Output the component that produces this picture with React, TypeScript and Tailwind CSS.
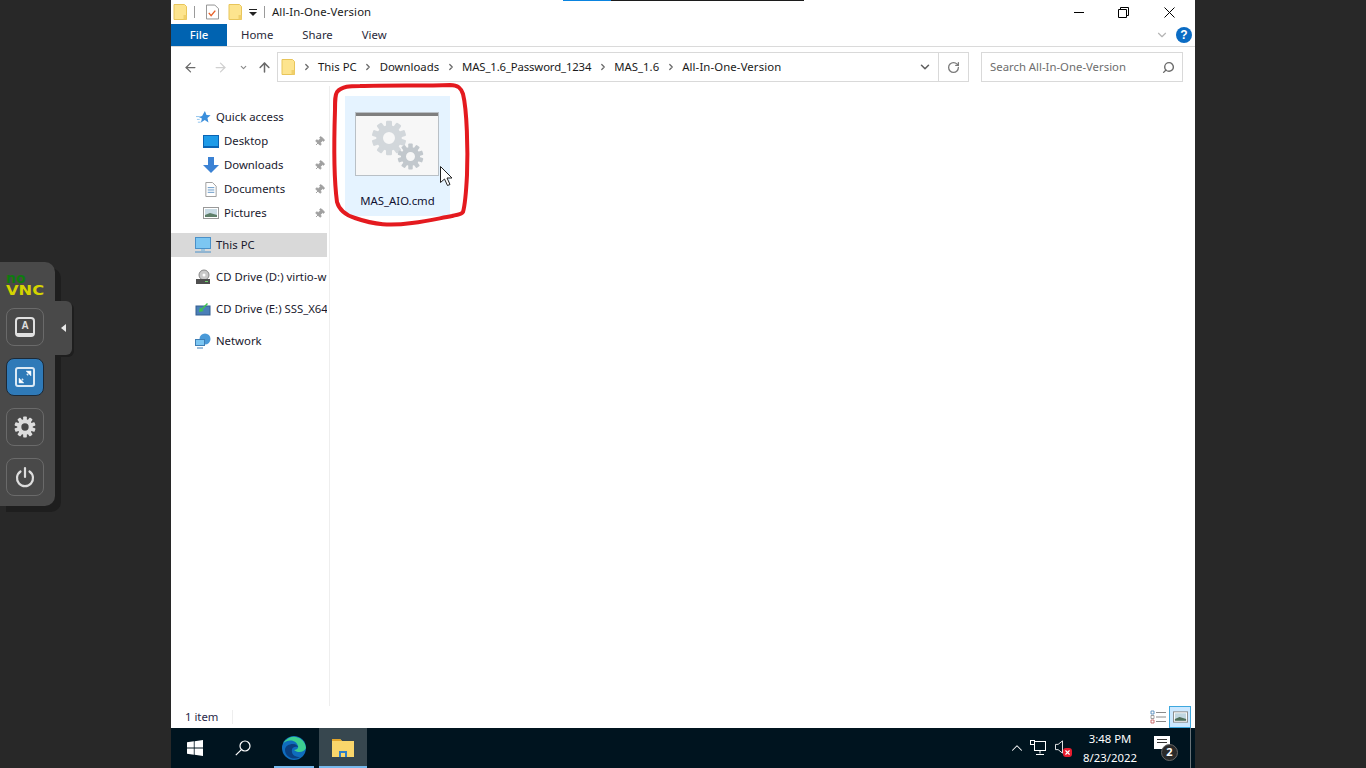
import React from 'react';
import { ArrowLeft, ArrowRight, ArrowUp, ChevronDown, ChevronRight, ChevronUp, RotateCw, Search, X, Pin } from 'lucide-react';

const Folder = ({ className = '' }: { className?: string }) => (
  <svg viewBox="0 0 14 16" className={className}>
    <path d="M1 .5h10.5l2 2v13H1z" fill="#fde48e" stroke="#e8c55a" strokeWidth="1" />
    <rect x="10.5" y="11" width="3" height="4.5" fill="#f0cf6a" />
  </svg>
);

const Gear = ({ size, color, className = '' }: { size: number; color: string; className?: string }) => (
  <svg viewBox="0 0 24 24" width={size} height={size} className={className}>
    <g fill={color}>
      {[0, 36, 72, 108, 144, 180, 216, 252, 288, 324].map((a) => (
        <rect key={a} x="10" y="0.5" width="4" height="6" rx="0.8" transform={`rotate(${a} 12 12)`} />
      ))}
      <path fillRule="evenodd" d="M12 3.5a8.5 8.5 0 1 1 0 17 8.5 8.5 0 0 1 0-17zm0 4.5a4 4 0 1 0 0 8 4 4 0 0 0 0-8z" />
    </g>
  </svg>
);

const NavRow = ({ icon, label, pinned, indent, active }: { icon: React.ReactNode; label: string; pinned?: boolean; indent?: boolean; active?: boolean }) => (
  <div className={`flex h-6 w-[156px] items-center overflow-hidden ${active ? 'bg-[#d9d9d9]' : ''}`}>
    <div className={`flex w-4 shrink-0 items-center justify-center ${indent ? 'ml-[32px]' : 'ml-[24px]'}`}>{icon}</div>
    <span className="ml-[5px] whitespace-nowrap text-[#1a1a2e]">{label}</span>
    {pinned && <Pin size={11} className="ml-auto mr-[2px] shrink-0 rotate-45 fill-[#a0a0a0] text-[#a0a0a0]" />}
  </div>
);

const Crumb = ({ label, className = '' }: { label: string; className?: string }) => (
  <>
    <ChevronRight size={10} strokeWidth={3} className="mx-[6.5px] text-[#6a6a6a]" />
    <span className={`text-[#1a1a1a] ${className}`}>{label}</span>
  </>
);

const ToolButton = ({ children, active }: { children: React.ReactNode; active?: boolean }) => (
  <div className={`flex h-[38px] w-[38px] items-center justify-center rounded-[8px] border ${active ? 'border-[#1c2a38] bg-[#2f7ab8]' : 'border-[#6a6a6a]'}`}>
    {children}
  </div>
);

const NoVncPanel = () => (
  <div className="relative flex h-[244px] w-[55px] flex-col items-start rounded-r-[10px] bg-[#494949] pl-[6px] shadow-[6px_6px_0_#1e1e1e]">
    <div className="mt-[10px] flex h-[24px] w-[38px] flex-col font-['DejaVu_Sans'] text-[14px] font-bold leading-[12px]">
      <span className="h-[12px] text-[#0f7a0f]">no</span>
      <span className="h-[12px] origin-left scale-x-[1.16] text-[#d4d400]">VNC</span>
    </div>
    <div className="mt-[12px] flex flex-col gap-[12px]">
      <ToolButton>
        <div className="flex h-[20px] w-[20px] items-center justify-center rounded-[4px] border-2 border-b-[4px] border-[#e0e0e0] font-['Liberation_Sans'] text-[10px] font-bold leading-none text-[#e0e0e0]">A</div>
      </ToolButton>
      <ToolButton active>
        <svg viewBox="0 0 24 24" width="24" height="24" fill="none" stroke="#dbe9f4">
          <rect x="3" y="3" width="18" height="18" rx="2" strokeWidth="2" />
          <path d="M13 6h5v5zM11 18H6v-5z" fill="#fff" strokeWidth="0.5" />
          <path d="M14 10l1-1M10 14l-1 1" strokeWidth="2" />
        </svg>
      </ToolButton>
      <ToolButton>
        <Gear size={22} color="#dddddd" />
      </ToolButton>
      <ToolButton>
        <svg viewBox="0 0 24 24" width="24" height="24" fill="none" stroke="#dddddd" strokeWidth="2.2" strokeLinecap="round">
          <path d="M12 3v9" />
          <path d="M7.5 6.5a8 8 0 1 0 9 0" />
        </svg>
      </ToolButton>
    </div>
    <div className="absolute left-[55px] top-[39px] flex h-[54px] w-[17px] items-center rounded-r-[6px] bg-[#494949] pl-[6px] shadow-[2px_2px_0_#1e1e1e]">
      <div className="h-0 w-0 border-y-[4px] border-r-[5px] border-y-transparent border-r-[#e8e8e8]" />
    </div>
  </div>
);

const CmdIcon = () => (
  <div className="relative h-[64px] w-[84px] border border-[#b9c0c6] bg-[#f7f7f7]">
    <div className="h-[3px] bg-[#7f7f7f]" />
    <Gear size={36} color="#d2d7db" className="absolute left-[15px] top-[7px]" />
    <Gear size={27} color="#c2c8cd" className="absolute left-[41px] top-[30px]" />
  </div>
);

export default function App() {
  return (
    <div className="flex h-screen w-full overflow-hidden bg-[#282828] font-['Noto_Sans',sans-serif] text-[11.35px]">
      <div className="flex w-[171px] shrink-0 items-center">
        <NoVncPanel />
      </div>

      <div className="relative flex h-full w-[1024px] shrink-0 flex-col bg-white">
        <div className="absolute left-[392px] top-0 flex h-[1px]">
          <div className="w-[48px] bg-[#0a84e0]" />
          <div className="w-[193px] bg-[#1c1c1c]" />
        </div>

        {/* title bar */}
        <div className="flex h-[24px] shrink-0 items-center pl-[2px]">
          <Folder className="h-[16px] w-[14px]" />
          <div className="ml-[7px] h-[12px] w-px bg-[#9a9a9a]" />
          <svg viewBox="0 0 14 16" className="ml-[11px] h-[16px] w-[13px]">
            <path d="M.5.5h9l4 4v11H.5z" fill="#fff" stroke="#8a8a8a" />
            <path d="M3 9l2.5 3L10 6.5" fill="none" stroke="#e8622a" strokeWidth="1.5" />
          </svg>
          <Folder className="ml-[9px] h-[16px] w-[14px]" />
          <svg viewBox="0 0 8 8" className="ml-[7px] mt-[2px] h-[8px] w-[8px]">
            <path d="M0 .5h8" stroke="#222" />
            <path d="M0 3h8L4 7z" fill="#222" />
          </svg>
          <div className="ml-[7px] h-[12px] w-px bg-[#9a9a9a]" />
          <span className="ml-[7px] tracking-[0.12px] text-[#1a1a1a]">All-In-One-Version</span>
          <div className="ml-auto flex items-center">
            <div className="mr-[34px] h-px w-[10px] bg-black" />
            <svg viewBox="0 0 11 11" className="mr-[35px] h-[11px] w-[11px]" fill="none" stroke="#000">
              <path d="M.5 2.5h8v8h-8zM2.5 2.5v-2h8v8h-2" />
            </svg>
            <svg viewBox="0 0 11 11" className="mr-[20px] h-[11px] w-[11px]" fill="none" stroke="#000">
              <path d="M.5.5l10 10M10.5.5l-10 10" />
            </svg>
          </div>
        </div>

        {/* ribbon tabs */}
        <div className="flex h-[23px] shrink-0 items-center border-b border-[#dadada]">
          <div className="flex h-[22px] w-[56px] items-center justify-center bg-[#0063b1] font-medium text-white">File</div>
          <span className="ml-[14px] text-[#2a2a3a]">Home</span>
          <span className="ml-[29px] text-[#2a2a3a]">Share</span>
          <span className="ml-[29px] text-[#2a2a3a]">View</span>
          <ChevronDown size={14} className="ml-auto mr-[7px] text-[#b5b5b5]" />
          <div className="mr-[3px] flex h-[16px] w-[16px] items-center justify-center rounded-full bg-[#0b6cc4] font-['Liberation_Sans'] text-[12px] font-bold text-white">?</div>
        </div>

        {/* address row */}
        <div className="flex h-[39px] shrink-0 items-center pt-[1px]">
          <ArrowLeft size={15} strokeWidth={2} className="ml-[12px] text-[#6a6a6a]" />
          <ArrowRight size={15} strokeWidth={2} className="ml-[15px] text-[#d0d0d0]" />
          <ChevronDown size={9} strokeWidth={3} className="ml-[11px] text-[#8a8a8a]" />
          <ArrowUp size={15} strokeWidth={2.4} className="ml-[9px] text-[#6a6a6a]" />
          <div className="ml-[5px] flex h-[30px] w-[692px] items-center border border-[#d9d9d9] pl-[3px]">
            <Folder className="h-[16px] w-[14px]" />
            <div className="flex items-center">
              <Crumb label="This PC" />
              <Crumb label="Downloads" />
              <Crumb label="MAS_1.6_Password_1234" className="tracking-[-0.14px]" />
              <Crumb label="MAS_1.6" />
              <Crumb label="All-In-One-Version" className="tracking-[0.12px]" />
            </div>
            <ChevronDown size={14} strokeWidth={2.6} className="ml-auto mr-[6px] text-[#5f5f5f]" />
            <div className="flex h-full w-[30px] items-center justify-center border-l border-[#d9d9d9]">
              <RotateCw size={13} strokeWidth={2.4} className="text-[#7a7a7a]" />
            </div>
          </div>
          <div className="ml-[12px] flex h-[30px] w-[202px] items-center border border-[#d9d9d9] pl-[8px] text-[#6d6d6d]">
            <span>Search All-In-One-Version</span>
            <Search size={13} strokeWidth={2.6} className="ml-auto mr-[7px] -scale-x-100 text-[#6a6a6a]" />
          </div>
        </div>

        {/* body */}
        <div className="flex min-h-0 flex-1">
          <div className="flex w-[159px] shrink-0 flex-col border-r border-[#eeeeee] pt-[19px]">
            <NavRow label="Quick access" icon={<svg viewBox="0 0 16 16" className="h-[15px] w-[15px]"><path d="M9.5 1l1.7 4.4 4.4.3-3.4 2.9 1.1 4.6-4-2.5-4 2.5 1-4.1L3 7.5l3.5-1z" fill="#3b8fdc" /><path d="M0 7h4M1 10h3M2 13h3" stroke="#8cc2ee" /></svg>} />
            <NavRow indent pinned label="Desktop" icon={<div className="h-[13px] w-[16px] border border-b-2 border-[#0a64b4] bg-[#1e9be8]" />} />
            <NavRow indent pinned label="Downloads" icon={<svg viewBox="0 0 16 16" className="h-[16px] w-[16px]"><path d="M5 0h6v8h5l-8 8-8-8h5z" fill="#3b82d4" /></svg>} />
            <NavRow indent pinned label="Documents" icon={<svg viewBox="0 0 12 16" className="h-[15px] w-[12px]"><path d="M.5.5h7l4 4v11H.5z" fill="#fff" stroke="#9a9a9a" /><path d="M2.5 6h7M2.5 8.5h7M2.5 11h7" stroke="#5f93c4" /></svg>} />
            <NavRow indent pinned label="Pictures" icon={<svg viewBox="0 0 16 12" className="h-[12px] w-[16px]"><rect x=".5" y=".5" width="15" height="11" fill="#fff" stroke="#999" /><rect x="2" y="2" width="12" height="8" fill="#c9dbe4" /><path d="M2 8l5-2 7 2v2H2z" fill="#5f7f6a" /></svg>} />
            <div className="mt-[8px]">
              <NavRow active label="This PC" icon={<svg viewBox="0 0 16 16" className="h-[16px] w-[16px]"><rect x=".5" y=".5" width="15" height="11" fill="#7cc6f2" stroke="#4a90c8" /><path d="M6 12h4v2H6z" fill="#9cc4de" /><path d="M0 15h16" stroke="#4a90c8" /></svg>} />
            </div>
            <div className="mt-[8px]">
              <NavRow label="CD Drive (D:) virtio-w" icon={<svg viewBox="0 0 16 16" className="h-[16px] w-[16px]"><circle cx="9" cy="6" r="5" fill="#c9c9c9" stroke="#888" /><circle cx="9" cy="6" r="1.5" fill="#fff" /><rect x="1" y="10" width="14" height="5" fill="#4f4f4f" /><rect x="10" y="12" width="3" height="1" fill="#6fd36f" /></svg>} />
            </div>
            <div className="mt-[8px]">
              <NavRow label="CD Drive (E:) SSS_X64" icon={<svg viewBox="0 0 16 16" className="h-[16px] w-[16px]"><rect x="1" y="5" width="14" height="9" fill="#4a7fb8" stroke="#345f8f" /><path d="M12 2L6 8l-1-2-1 5 5-1-2-1 6-6z" fill="#3cc44a" /></svg>} />
            </div>
            <div className="mt-[8px]">
              <NavRow label="Network" icon={<svg viewBox="0 0 16 16" className="h-[16px] w-[16px]"><circle cx="10" cy="6" r="5.5" fill="#4a9ad8" /><rect x=".5" y="6.5" width="9" height="6" fill="#7cc6f2" stroke="#3f7fb5" /><path d="M2 15h6" stroke="#3f7fb5" /></svg>} />
            </div>
          </div>

          <div className="relative min-w-0 flex-1 pl-[15px] pt-[10px]">
            <div className="flex h-[120px] w-[105px] flex-col bg-[#e5f3ff] pl-[10px] pt-[16px]">
              <CmdIcon />
              <span className="mt-[16px] w-[85px] text-center text-[#101030]">MAS_AIO.cmd</span>
            </div>
            {/* hand drawn red annotation */}
            <svg className="absolute left-0 top-[-6px]" width="150" height="150" viewBox="0 0 150 150" fill="none">
              <path d="M7 12C12 6 20 6 30 6 60 5 95 6 120 5c8 0 11 3 13 9 4 16 5 56 4 81-1 20-2 30-4 37-2 3-5 2-11 4-12 2-22 5-40 7-22 3-37 2-57-5-10-3-16-9-18-16C4 100 4 60 5 30 5 20 5 15 7 12z" stroke="#e41a1f" strokeWidth="4" strokeLinejoin="round" />
            </svg>
            {/* mouse cursor */}
            <svg className="absolute left-[110px] top-[80px]" width="13" height="20" viewBox="0 0 13 20">
              <path d="M.5.5v16l4-3.5 3 6.5 2.5-1-3-6.5h5z" fill="#fff" stroke="#222" />
            </svg>
          </div>
        </div>

        {/* status bar */}
        <div className="flex h-[22px] shrink-0 items-center pl-[14px] text-[#2a2a4a]">
          <span>1 item</span>
          <div className="ml-[14px] h-[14px] w-px bg-[#eeeeee]" />
          <svg viewBox="0 0 16 14" className="ml-auto h-[14px] w-[16px]">
            <path d="M1 1h3v3H1z" fill="none" stroke="#3f7fb5" strokeWidth="0.8" />
            <path d="M1 5.5h3v3H1z" fill="none" stroke="#8a8a8a" strokeWidth="0.8" />
            <path d="M1 10h3v3H1z" fill="none" stroke="#c05050" strokeWidth="0.8" />
            <path d="M6 2.5h10M6 7h10M6 11.5h10" stroke="#8a8a8a" />
          </svg>
          <div className="ml-[3px] mr-[4px] flex h-[22px] w-[22px] items-center justify-center border border-[#3ea8de] bg-[#cce8ff]">
            <svg viewBox="0 0 16 12" className="h-[12px] w-[15px]"><rect x=".5" y=".5" width="15" height="11" fill="#fff" stroke="#888" /><rect x="2" y="2" width="12" height="8" fill="#c0d6e0" /><path d="M2 8l5-2 7 2v2H2z" fill="#4f6f5a" /></svg>
          </div>
        </div>

        {/* taskbar */}
        <div className="flex h-[40px] shrink-0 items-center bg-[#00141f] text-white">
          <svg viewBox="0 0 16 16" className="ml-[16px] h-[16px] w-[16px]" fill="#fff">
            <path d="M0 2.3l6.8-1v6.3H0zM7.6 1.2L16 0v7.6H7.6zM0 8.4h6.8v6.3l-6.8-1zM7.6 8.4H16V16l-8.4-1.2z" />
          </svg>
          <svg viewBox="0 0 16 16" className="ml-[32px] h-[16px] w-[16px]" fill="none" stroke="#fff" strokeWidth="1.2">
            <circle cx="10" cy="6" r="5" />
            <path d="M6.4 9.6L.8 15.2" />
          </svg>
          <div className="relative ml-[23px] flex h-full w-[40px] items-center justify-center">
            <svg viewBox="0 0 24 24" className="h-[24px] w-[24px]">
              <circle cx="12" cy="12" r="12" fill="#0f6cbd" />
              <path d="M24 12A12 12 0 0 0 1 8c3-5 13-5 15 2 1 3-2 4-4 4 3 3 10 3 12-2z" fill="#3ccf91" />
              <path d="M3 14c0-4 4-6 8-6 3 0 5 2 5 3-3-1-7 0-6 5 0 3 4 5 8 5-6 4-15 0-15-7z" fill="#0a3f80" />
            </svg>
            <div className="absolute bottom-0 h-[2px] w-full bg-[#76b9ed]" />
          </div>
          <div className="relative ml-[5px] flex h-full w-[48px] items-center justify-center bg-[#37474f]">
            <svg viewBox="0 0 24 20" className="h-[20px] w-[24px]">
              <path d="M1 1h8l2 2h12v16H1z" fill="#f9d66b" />
              <path d="M1 1h8l2 2H1z" fill="#e2a52a" />
              <path d="M8 13h8v6H8z" fill="#2f7fc8" />
              <path d="M10 15h4v4h-4z" fill="#f9d66b" />
            </svg>
            <div className="absolute bottom-0 h-[2px] w-full bg-[#76b9ed]" />
          </div>

          <ChevronUp size={18} strokeWidth={1.4} className="ml-auto" />
          <svg viewBox="0 0 16 16" className="ml-[4px] h-[16px] w-[16px]" fill="none" stroke="#fff">
            <rect x="4.5" y="1.5" width="11" height="9" />
            <path d="M10 10.5v3M6 14.5h8" />
            <rect x=".5" y=".5" width="4" height="4" fill="#00141f" />
          </svg>
          <div className="relative ml-[9px] h-[16px] w-[16px]">
            <svg viewBox="0 0 9 16" className="h-[14px] w-[8px]" fill="none" stroke="#fff"><path d="M.5 5h3l5-4v14l-5-4h-3z" /></svg>
            <div className="absolute bottom-[-1px] right-[-1px] flex h-[9px] w-[9px] items-center justify-center rounded-[3px] bg-[#e81c2e]">
              <X size={7} strokeWidth={4} />
            </div>
          </div>
          <div className="ml-[9px] flex w-[60px] flex-col items-center text-[11.35px] leading-[19px]">
            <span>3:48 PM</span>
            <span>8/23/2022</span>
          </div>
          <div className="relative ml-[14px] h-[26px] w-[26px]">
            <div className="absolute left-0 top-[1px] flex h-[13px] w-[16px] flex-col gap-[2px] bg-white p-[3px]">
              <div className="h-px bg-[#333]" />
              <div className="h-px bg-[#333]" />
            </div>
            <div className="absolute left-[7px] top-[9px] flex h-[17px] w-[17px] items-center justify-center rounded-full border border-[#666] bg-[#2a2a2a] text-[11px] font-bold">2</div>
          </div>
          <div className="ml-[10px] mr-[4px] h-full w-px bg-[#6a7378]" />
        </div>
      </div>
    </div>
  );
}
